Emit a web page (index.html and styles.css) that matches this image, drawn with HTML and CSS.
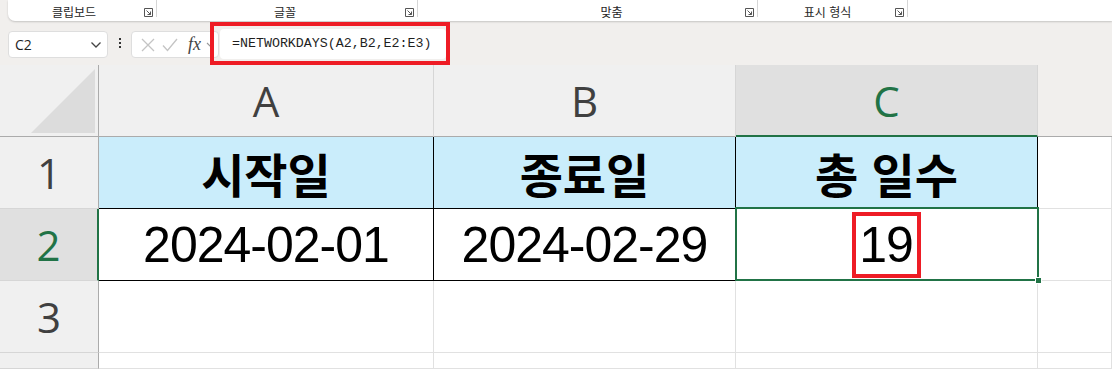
FILE: index.html
```html
<!DOCTYPE html>
<html lang="ko">
<head>
<meta charset="utf-8">
<title>NETWORKDAYS</title>
<link rel="stylesheet" href="styles.css">
</head>
<body>
<div class="ribbon">
  <div class="group g1"><span class="glabel">클립보드</span><svg class="launch" width="9" height="9" viewBox="0 0 9 9"><path d="M0.5 0.5h8v8h-8z M2.5 2.5l4 4 M6.5 3.5v3h-3" fill="none" stroke="#555" stroke-width="1"/></svg></div>
  <div class="group g2"><span class="glabel">글꼴</span><svg class="launch" width="9" height="9" viewBox="0 0 9 9"><path d="M0.5 0.5h8v8h-8z M2.5 2.5l4 4 M6.5 3.5v3h-3" fill="none" stroke="#555" stroke-width="1"/></svg></div>
  <div class="group g3"><span class="glabel">맞춤</span><svg class="launch" width="9" height="9" viewBox="0 0 9 9"><path d="M0.5 0.5h8v8h-8z M2.5 2.5l4 4 M6.5 3.5v3h-3" fill="none" stroke="#555" stroke-width="1"/></svg></div>
  <div class="group g4"><span class="glabel">표시 형식</span><svg class="launch" width="9" height="9" viewBox="0 0 9 9"><path d="M0.5 0.5h8v8h-8z M2.5 2.5l4 4 M6.5 3.5v3h-3" fill="none" stroke="#555" stroke-width="1"/></svg></div>
</div>

<div class="fbar">
  <div class="namebox"><span class="ref">C2</span><svg width="12" height="8" viewBox="0 0 12 8"><path d="M1.5 1.5l4.5 4.5 4.5-4.5" fill="none" stroke="#444" stroke-width="1.3"/></svg></div>
  <div class="dots"><i></i><i></i><i></i></div>
  <div class="iconbox">
    <svg width="14" height="14" viewBox="0 0 14 14"><path d="M1 1l12 12M13 1L1 13" stroke="#c4c4c4" stroke-width="1.3"/></svg>
    <svg width="16" height="14" viewBox="0 0 16 14"><path d="M1 7.5l4.5 5L15 1" fill="none" stroke="#c4c4c4" stroke-width="1.3"/></svg>
    <span class="fx">fx</span>
    <svg width="8" height="6" viewBox="0 0 8 6"><path d="M1 1l3 3 3-3" fill="none" stroke="#999" stroke-width="1.1"/></svg>
  </div>
  <div class="formula">
    <div class="finput">=NETWORKDAYS(A2,B2,E2:E3)</div>
    <div class="redbox"></div>
  </div>
</div>

<div class="sheet">
  <div class="corner"><svg width="64" height="64" viewBox="0 0 64 64"><polygon points="64,0 64,64 0,64" fill="#dcdcdc"/></svg></div>
  <div class="colh">A</div>
  <div class="colh">B</div>
  <div class="colh sel">C</div>
  <div class="colh last"></div>

  <div class="rowh">1</div>
  <div class="cell head">시작일</div>
  <div class="cell head">종료일</div>
  <div class="cell head">총 일수</div>
  <div class="cell"></div>

  <div class="rowh sel">2</div>
  <div class="cell date">2024-02-01</div>
  <div class="cell date">2024-02-29</div>
  <div class="cell date active"><span class="mark">19</span></div>
  <div class="cell"></div>

  <div class="rowh">3</div>
  <div class="cell"></div>
  <div class="cell"></div>
  <div class="cell"></div>
  <div class="cell"></div>

  <div class="rowh"></div>
  <div class="cell"></div>
  <div class="cell"></div>
  <div class="cell"></div>
  <div class="cell"></div>
</div>
</body>
</html>
```

FILE: styles.css
```css
html, body {
  margin: 0;
  padding: 0;
}
body {
  width: 1112px;
  height: 369px;
  overflow: hidden;
  background: #f1efed;
  font-family: "Noto Sans CJK KR", "Noto Sans", sans-serif;
}

/* ribbon */
.ribbon {
  margin-left: 8px;
  height: 21px;
  background: #ffffff;
  border-bottom-left-radius: 7px;
  box-shadow: 0 1px 2px rgba(0,0,0,0.18);
  display: flex;
}
.group {
  display: flex;
  align-items: center;
  height: 17px;
  border-right: 1px solid #d6d6d6;
  box-sizing: border-box;
}
.glabel {
  flex: 1;
  text-align: center;
  font-size: 12px;
  line-height: 17px;
  color: #262626;
  margin-top: 5px;
}
.launch {
  margin-right: 3px;
  margin-top: 8px;
}
.g1 { width: 149px; }
.g1 .glabel { padding-right: 4px; }
.g2 { width: 261px; padding-left: 8px; }
.g3 { width: 340px; padding-left: 60px; }
.g4 { width: 150px; padding-left: 2px; }

/* formula bar */
.fbar {
  height: 44px;
  display: flex;
  align-items: flex-start;
  padding-left: 8px;
}
.namebox {
  margin-top: 10px;
  width: 100px;
  height: 27px;
  box-sizing: border-box;
  background: #fff;
  border: 1px solid #dedede;
  border-radius: 4px;
  display: flex;
  align-items: center;
  justify-content: space-between;
  padding: 0 5px 0 6px;
}
.ref {
  font-family: "Open Sans", "Liberation Sans", sans-serif;
  font-size: 14px;
  color: #1f1f1f;
}
.dots {
  width: 23px;
  margin-top: 17px;
  display: flex;
  flex-direction: column;
  align-items: center;
  gap: 2px;
}
.dots i {
  display: block;
  width: 2px;
  height: 2px;
  background: #333;
}
.iconbox {
  margin-top: 10px;
  width: 88px;
  height: 27px;
  box-sizing: border-box;
  background: #fff;
  border: 1px solid #dedede;
  border-radius: 4px;
  display: flex;
  align-items: center;
  gap: 7px;
  padding-left: 9px;
}
.fx {
  font-family: "Liberation Serif", serif;
  font-style: italic;
  font-size: 18px;
  color: #444;
  margin-left: 3px;
  margin-right: -2px;
}
.formula {
  position: relative;
  margin-left: -9px;
  margin-top: 1px;
  width: 240px;
  height: 43px;
  display: flex;
  align-items: center;
}
.finput {
  margin-left: 10px;
  width: 226px;
  height: 30px;
  box-sizing: border-box;
  background: #fff;
  border-radius: 4px;
  font-family: "Liberation Mono", monospace;
  font-size: 13.3px;
  line-height: 30px;
  color: #1f1f1f;
  padding-left: 12px;
}
.redbox {
  position: absolute;
  left: 0;
  top: 0;
  right: 0;
  bottom: 0;
  border: 4px solid #ee1c25;
}

/* sheet */
.sheet {
  display: grid;
  grid-template-columns: 99px 335px 302px 302px 1fr;
  grid-template-rows: 72px 72px 72px 72px 1fr;
  height: 304px;
  background: #fff;
}
.sheet > div {
  box-sizing: border-box;
}
.corner {
  background: #f0f0f0;
  border-right: 1px solid #ababab;
  border-bottom: 1px solid #ababab;
  display: flex;
  align-items: flex-end;
  justify-content: flex-end;
  padding: 0 3px 3px 0;
}
.colh {
  background: #f0f0f0;
  border-right: 1px solid #d6d6d6;
  border-bottom: 1px solid #ababab;
  display: flex;
  align-items: center;
  justify-content: center;
  font-family: "Open Sans", "Liberation Sans", sans-serif;
  font-size: 42px;
  color: #404040;
}
.colh.sel {
  background: #e0e0e0;
  color: #217346;
  border-bottom: 2px solid #217346;
}
.colh.last {
  background: #f1efed;
  border-right: none;
}
.rowh {
  background: #f0f0f0;
  border-right: 1px solid #ababab;
  border-bottom: 1px solid #d6d6d6;
  display: flex;
  align-items: center;
  justify-content: center;
  font-family: "Open Sans", "Liberation Sans", sans-serif;
  font-size: 42px;
  color: #404040;
}
.rowh.sel {
  background: #e0e0e0;
  color: #217346;
  border-right: 2px solid #217346;
}
.cell {
  border-right: 1px solid #e1e1e1;
  border-bottom: 1px solid #e1e1e1;
  display: flex;
  align-items: center;
  justify-content: center;
  color: #000;
}
.cell.head {
  background: #caedfb;
  border-right: 1px solid #000;
  border-bottom: 1px solid #000;
  font-family: "Noto Sans CJK KR", sans-serif;
  font-weight: 700;
  font-size: 47px;
}
.cell.date {
  border-right: 1px solid #000;
  border-bottom: 1px solid #000;
  font-family: "Liberation Sans", sans-serif;
  font-size: 50px;
  letter-spacing: -1px;
}
.cell.active {
  position: relative;
}
.cell.active::after {
  content: "";
  position: absolute;
  left: -1px;
  top: -2px;
  right: -2px;
  bottom: -1px;
  border: 2px solid #217346;
}
.cell.active::before {
  content: "";
  position: absolute;
  right: -5px;
  bottom: -4px;
  width: 5px;
  height: 5px;
  background: #217346;
  border: 1px solid #fff;
  z-index: 2;
}
.mark {
  border: 4px solid #ee1c25;
  padding: 0 4px 0 3px;
  line-height: 58px;
  height: 58px;
  display: inline-block;
}
```
